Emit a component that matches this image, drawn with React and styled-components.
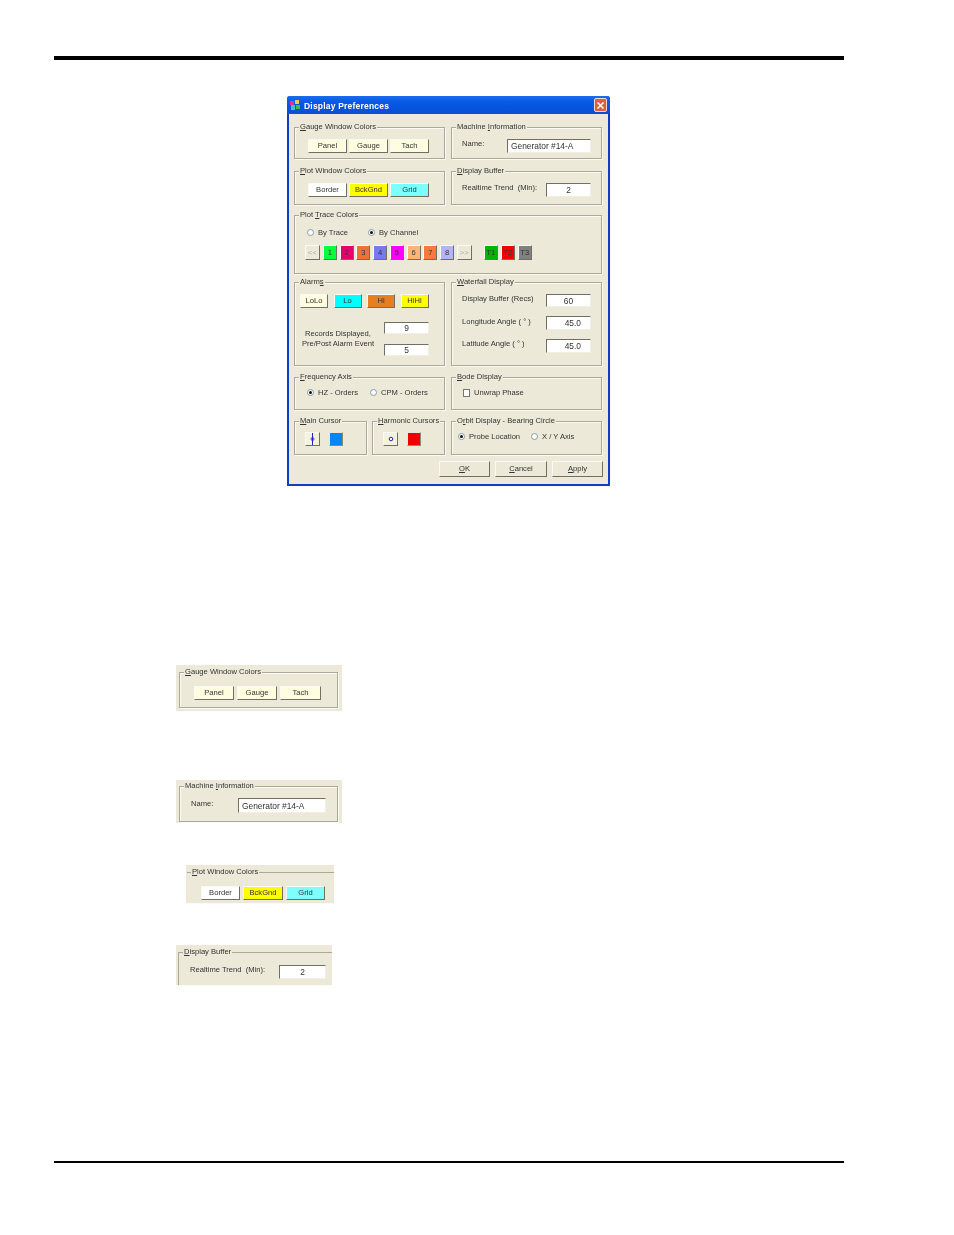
import React from "react";
import styled, { createGlobalStyle } from "styled-components";

const Global = createGlobalStyle`
  html, body { margin: 0; padding: 0; background: #fff; }
  body { font-family: "Liberation Sans", Arial, sans-serif; }
`;

const Page = styled.div`
  width: 954px;
  height: 1235px;
  padding-top: 56px;
  box-sizing: border-box;
  overflow: hidden;
  background: #fff;
  display: flex;
  flex-direction: column;
`;

const Rule = styled.div`
  width: 790px;
  margin: ${(p) => p.$top || 0}px 0 0 54px;
  height: ${(p) => p.$h}px;
  background: #000;
`;

const Dialog = styled.div`
  width: 323px;
  height: 390px;
  margin: 36px 0 0 287px;
  box-sizing: border-box;
  border: solid #0c3fc4;
  border-width: 0 2px 2px 2px;
  border-radius: 3px 3px 0 0;
  background: #ece9d8;
  display: flex;
  flex-direction: column;
  filter: blur(0.4px);
  font-size: 7.6px;
  color: #333;
`;

const TitleBar = styled.div`
  height: 18px;
  margin: 0 -2px;
  padding: 0 3px;
  border-radius: 3px 3px 0 0;
  background: linear-gradient(#1d6df0 0%, #0a5ae6 30%, #0653dc 70%, #0a4fd0 100%);
  display: flex;
  align-items: center;
  gap: 3px;
`;

const Title = styled.div`
  flex: 1;
  padding-top: 2px;
  color: #fff;
  font-size: 8.5px;
  font-weight: 700;
  letter-spacing: 0.2px;
`;

const Close = styled.div`
  width: 13px;
  height: 14px;
  border: 1px solid #f4d8cc;
  border-radius: 2px;
  background: #d9623a;
  box-sizing: border-box;
  display: flex;
  align-items: center;
  justify-content: center;
`;

const Body = styled.div`
  padding: 13px 6px 0 5px;
  display: flex;
  flex-direction: column;
`;

const Row = styled.div`
  display: flex;
  gap: ${(p) => p.$gap ?? 6}px;
  height: ${(p) => p.$h}px;
  margin-bottom: ${(p) => p.$after ?? 0}px;
`;

const CursorPair = styled.div`
  display: flex;
  gap: 5px;
  width: 151px;
`;

const Group = styled.div`
  width: ${(p) => p.$w}px;
  height: ${(p) => (p.$h ? p.$h + "px" : "auto")};
  box-sizing: border-box;
  border: 1px solid #aca899;
  box-shadow: 1px 1px 0 #fbfaf5, inset 1px 1px 0 #fbfaf5;
  display: flex;
  flex-direction: column;
`;

const OpenGroup = styled(Group)`
  border-width: 1px 0 0 ${(p) => (p.$leftEdge ? 1 : 0)}px;
  box-shadow: 0 1px 0 #fbfaf5;
`;

const Legend = styled.div`
  height: 10px;
  line-height: 10px;
  margin: -6px 0 0 4px;
  padding: 0 1px;
  width: fit-content;
  background: #ece9d8;
  white-space: nowrap;
`;

const Content = styled.div`
  display: flex;
  flex-direction: ${(p) => (p.$col ? "column" : "row")};
  align-items: ${(p) => (p.$col ? "stretch" : "center")};
  gap: ${(p) => p.$gap ?? 0}px;
  padding: ${(p) => p.$top ?? 7}px 0 0 ${(p) => p.$left ?? 0}px;
`;

const Btn = styled.div`
  width: ${(p) => p.$w ?? 39}px;
  height: ${(p) => p.$h ?? 14}px;
  flex: none;
  box-sizing: border-box;
  background: ${(p) => p.$bg ?? "#fffde0"};
  color: ${(p) => p.$fg ?? "#333"};
  border: 1px solid;
  border-color: #fafaf4 #716f64 #716f64 #fafaf4;
  padding-bottom: 1px;
  display: flex;
  align-items: center;
  justify-content: center;
  font-size: 7.6px;
  white-space: nowrap;
`;

const Label = styled.div`
  width: ${(p) => p.$w}px;
  flex: none;
  white-space: nowrap;
  line-height: 10px;
  margin-top: ${(p) => p.$shift ?? -4}px;
`;

const Field = styled.div`
  width: ${(p) => p.$w ?? 45}px;
  height: ${(p) => p.$h ?? 14}px;
  flex: none;
  box-sizing: border-box;
  background: #fff;
  border: 1px solid;
  border-color: #716f64 #f1efe2 #f1efe2 #716f64;
  display: flex;
  align-items: center;
  justify-content: ${(p) => p.$align ?? "center"};
  padding: 0 ${(p) => p.$pad ?? 0}px;
  font-size: 8.4px;
  white-space: nowrap;
`;

const RadioDot = styled.span`
  width: 7px;
  height: 7px;
  flex: none;
  box-sizing: border-box;
  border-radius: 50%;
  border: 1px solid #8a9bac;
  background: #fff;
  display: flex;
  align-items: center;
  justify-content: center;
  &::after {
    content: "";
    display: ${(p) => (p.$on ? "block" : "none")};
    width: 3px;
    height: 3px;
    border-radius: 50%;
    background: #111;
  }
`;

const Option = styled.div`
  display: flex;
  align-items: center;
  gap: 4px;
  width: ${(p) => p.$w}px;
  flex: none;
  white-space: nowrap;
`;

const Check = styled.span`
  width: 7px;
  height: 8px;
  flex: none;
  box-sizing: border-box;
  border: 1px solid #76786c;
  background: #fff;
`;

const Swatch = styled.div`
  width: 14px;
  height: 14px;
  flex: none;
  box-sizing: border-box;
  background: ${(p) => p.$bg};
  border: 1px solid;
  border-color: #e8e6da #8b897c #8b897c #e8e6da;
`;

const Center = styled.div`
  width: ${(p) => p.$w}px;
  flex: none;
  text-align: center;
  line-height: 10px;
  white-space: nowrap;
`;

const Stack = styled.div`
  display: flex;
  flex-direction: column;
  gap: ${(p) => p.$gap}px;
`;

const Line = styled.div`
  display: flex;
  align-items: ${(p) => p.$align ?? "flex-start"};
  height: ${(p) => p.$h}px;
`;

const Footer = styled.div`
  display: flex;
  justify-content: flex-end;
  gap: 5px;
  margin: 6px -1px 0 0;
`;

const Crop = styled.div`
  margin: ${(p) => p.$mt}px 0 0 ${(p) => p.$ml}px;
  width: ${(p) => p.$w}px;
  height: ${(p) => p.$h}px;
  padding: ${(p) => p.$pt}px 0 0 ${(p) => p.$pl}px;
  box-sizing: border-box;
  background: #ece9d8;
  filter: blur(0.4px);
  font-size: 7.6px;
  color: #333;
`;

const TraceBar = styled.div`
  display: flex;
  gap: 2.75px;
  margin-left: 10px;
  margin-top: 7px;
`;

const TGroup = styled.div`
  display: flex;
  gap: 2.5px;
  margin-left: 9px;
`;

const Win = () => (
  <svg width="11" height="11" viewBox="0 0 11 11">
    <rect x="0" y="1" width="4" height="4" fill="#d23a9a" />
    <rect x="5" y="0" width="4" height="4" fill="#e8d23a" />
    <rect x="1" y="5" width="4" height="5" fill="#3ac0d8" />
    <rect x="6" y="5" width="4" height="4" fill="#48b848" />
  </svg>
);

const X = () => (
  <svg width="9" height="9" viewBox="0 0 9 9">
    <path d="M1.5 1.5 L7.5 7.5 M7.5 1.5 L1.5 7.5" stroke="#fff" strokeWidth="1.6" />
  </svg>
);

const MainCursorIcon = () => (
  <svg width="7" height="12" viewBox="0 0 7 12">
    <path d="M3.5 0 V12" stroke="#2424c0" strokeWidth="1" />
    <circle cx="3.5" cy="6" r="1.5" fill="none" stroke="#2424c0" strokeWidth="0.8" />
  </svg>
);

const HarmonicIcon = () => (
  <svg width="6" height="6" viewBox="0 0 6 6">
    <circle cx="3" cy="3" r="1.8" fill="none" stroke="#2424c0" strokeWidth="1" />
  </svg>
);

const traces = [
  ["1", "#00ff3c"], ["2", "#e6006e"], ["3", "#f0703c"], ["4", "#7878f0"],
  ["5", "#ff00ff"], ["6", "#ffb478"], ["7", "#ff7840"], ["8", "#b4b4f0"],
];

export default function App() {
  return (
    <Page>
      <Global />
      <Rule $h={4} />
      <Dialog>
        <TitleBar>
          <Win />
          <Title>Display Preferences</Title>
          <Close><X /></Close>
        </TitleBar>
        <Body>
          <Row $h={32} $after={12}>
            <Group $w={151}>
              <Legend><u>G</u>auge Window Colors</Legend>
              <Content $left={13} $gap={2}>
                <Btn>Panel</Btn>
                <Btn>Gauge</Btn>
                <Btn>Tach</Btn>
              </Content>
            </Group>
            <Group $w={151}>
              <Legend>Machine <u>I</u>nformation</Legend>
              <Content $left={10}>
                <Label $w={45} $shift={-5}>Name:</Label>
                <Field $w={84} $align="flex-start" $pad={3}>Generator #14-A</Field>
              </Content>
            </Group>
          </Row>
          <Row $h={34} $after={10}>
            <Group $w={151}>
              <Legend><u>P</u>lot Window Colors</Legend>
              <Content $left={13} $gap={2}>
                <Btn $bg="#ffffff">Border</Btn>
                <Btn $bg="#ffff00">BckGnd</Btn>
                <Btn $bg="#7dffff">Grid</Btn>
              </Content>
            </Group>
            <Group $w={151}>
              <Legend><u>D</u>isplay Buffer</Legend>
              <Content $left={10}>
                <Label $w={84}>Realtime Trend&nbsp; (Min):</Label>
                <Field>2</Field>
              </Content>
            </Group>
          </Row>
          <Row $h={59} $after={8}>
            <Group $w={308}>
              <Legend>Plot <u>T</u>race Colors</Legend>
              <Content $col $top={6} $left={0}>
                <Line $h={12} $align="center">
                  <Content $top={0} $left={12}>
                    <Option $w={61}><RadioDot />By Trace</Option>
                    <Option $w={50}><RadioDot $on />By Channel</Option>
                  </Content>
                </Line>
                <TraceBar>
                  <Btn $w={15} $h={15} $bg="#ece9d8" $fg="#b0aea0">&lt;&lt;</Btn>
                  {traces.map(([n, c]) => (
                    <Btn key={n} $w={14} $h={15} $bg={c}>{n}</Btn>
                  ))}
                  <Btn $w={15} $h={15} $bg="#ece9d8" $fg="#b0aea0">&gt;&gt;</Btn>
                  <TGroup>
                    <Btn $w={14.5} $h={15} $bg="#00b400">T1</Btn>
                    <Btn $w={14.5} $h={15} $bg="#f00000">T2</Btn>
                    <Btn $w={14.5} $h={15} $bg="#808080">T3</Btn>
                  </TGroup>
                </TraceBar>
              </Content>
            </Group>
          </Row>
          <Row $h={84} $after={11}>
            <Group $w={151}>
              <Legend>Alarm<u>s</u></Legend>
              <Content $left={5} $gap={5.5}>
                <Btn $w={28}>LoLo</Btn>
                <Btn $w={28} $bg="#00ffff">Lo</Btn>
                <Btn $w={28} $bg="#e67e22">Hi</Btn>
                <Btn $w={28} $bg="#ffff00">HiHi</Btn>
              </Content>
              <Content $top={14} $left={6} $gap={9}>
                <Stack $gap={0}>
                  <Center $w={74}>Records Displayed,</Center>
                  <Center $w={74}>Pre/Post Alarm Event</Center>
                </Stack>
                <Stack $gap={10}>
                  <Field $h={12} $w={45}>9</Field>
                  <Field $h={12} $w={45}>5</Field>
                </Stack>
              </Content>
            </Group>
            <Group $w={151}>
              <Legend><u>W</u>aterfall Display</Legend>
              <Content $col $left={10}>
                <Line $h={22}>
                  <Label $w={84} $shift={0}>Display Buffer (Recs)</Label>
                  <Field $h={13}>60</Field>
                </Line>
                <Line $h={23}>
                  <Label $w={84} $shift={1}>Longitude Angle ( ° )</Label>
                  <Field $h={14} $align="flex-end" $pad={9}>45.0</Field>
                </Line>
                <Line $h={14}>
                  <Label $w={84} $shift={0}>Latitude Angle ( ° )</Label>
                  <Field $h={14} $align="flex-end" $pad={9}>45.0</Field>
                </Line>
              </Content>
            </Group>
          </Row>
          <Row $h={33} $after={11}>
            <Group $w={151}>
              <Legend><u>F</u>requency Axis</Legend>
              <Content $top={6} $left={12}>
                <Option $w={63}><RadioDot $on />HZ - Orders</Option>
                <Option $w={56}><RadioDot />CPM - Orders</Option>
              </Content>
            </Group>
            <Group $w={151}>
              <Legend><u>B</u>ode Display</Legend>
              <Content $top={6} $left={11}>
                <Option $w={80}><Check />Unwrap Phase</Option>
              </Content>
            </Group>
          </Row>
          <Row $h={34}>
            <CursorPair>
              <Group $w={73}>
                <Legend><u>M</u>ain Cursor</Legend>
                <Content $left={10} $gap={9} $top={6}>
                  <Btn $w={15} $bg="#f5f2dc"><MainCursorIcon /></Btn>
                  <Swatch $bg="#0a84f0" />
                </Content>
              </Group>
              <Group $w={73}>
                <Legend><u>H</u>armonic Cursors</Legend>
                <Content $left={10} $gap={9} $top={6}>
                  <Btn $w={15} $bg="#f5f2dc"><HarmonicIcon /></Btn>
                  <Swatch $bg="#f00000" />
                </Content>
              </Group>
            </CursorPair>
            <Group $w={151}>
              <Legend>O<u>r</u>bit Display - Bearing Circle</Legend>
              <Content $top={6} $left={6}>
                <Option $w={73}><RadioDot $on />Probe Location</Option>
                <Option $w={50}><RadioDot />X / Y Axis</Option>
              </Content>
            </Group>
          </Row>
          <Footer>
            <Btn $w={51} $h={16} $bg="#ece9d8"><span><u>O</u>K</span></Btn>
            <Btn $w={52} $h={16} $bg="#ece9d8"><span><u>C</u>ancel</span></Btn>
            <Btn $w={51} $h={16} $bg="#ece9d8"><span><u>A</u>pply</span></Btn>
          </Footer>
        </Body>
      </Dialog>

      <Crop $mt={179} $ml={176} $w={166} $h={46} $pt={7} $pl={3}>
        <Group $w={159} $h={36}>
          <Legend><u>G</u>auge Window Colors</Legend>
          <Content $left={14} $top={9} $gap={3}>
            <Btn $w={40}>Panel</Btn>
            <Btn $w={40}>Gauge</Btn>
            <Btn $w={41}>Tach</Btn>
          </Content>
        </Group>
      </Crop>

      <Crop $mt={69} $ml={176} $w={166} $h={43} $pt={6} $pl={3}>
        <Group $w={159} $h={36}>
          <Legend>Machine <u>I</u>nformation</Legend>
          <Content $left={11} $top={7}>
            <Label $w={47}>Name:</Label>
            <Field $w={88} $h={15} $align="flex-start" $pad={3}>Generator #14-A</Field>
          </Content>
        </Group>
      </Crop>

      <Crop $mt={42} $ml={186} $w={148} $h={38} $pt={7} $pl={1}>
        <OpenGroup $w={147} $h={31}>
          <Legend><u>P</u>lot Window Colors</Legend>
          <Content $left={14} $top={9} $gap={3}>
            <Btn $w={39} $bg="#ffffff">Border</Btn>
            <Btn $w={40} $bg="#ffff00">BckGnd</Btn>
            <Btn $w={39} $bg="#7dffff">Grid</Btn>
          </Content>
        </OpenGroup>
      </Crop>

      <Crop $mt={42} $ml={176} $w={156} $h={40} $pt={7} $pl={2}>
        <OpenGroup $w={154} $h={33} $leftEdge>
          <Legend><u>D</u>isplay Buffer</Legend>
          <Content $left={11} $top={8}>
            <Label $w={89}>Realtime Trend&nbsp; (Min):</Label>
            <Field $w={47}>2</Field>
          </Content>
        </OpenGroup>
      </Crop>

      <Rule $h={2} $top={176} />
    </Page>
  );
}
